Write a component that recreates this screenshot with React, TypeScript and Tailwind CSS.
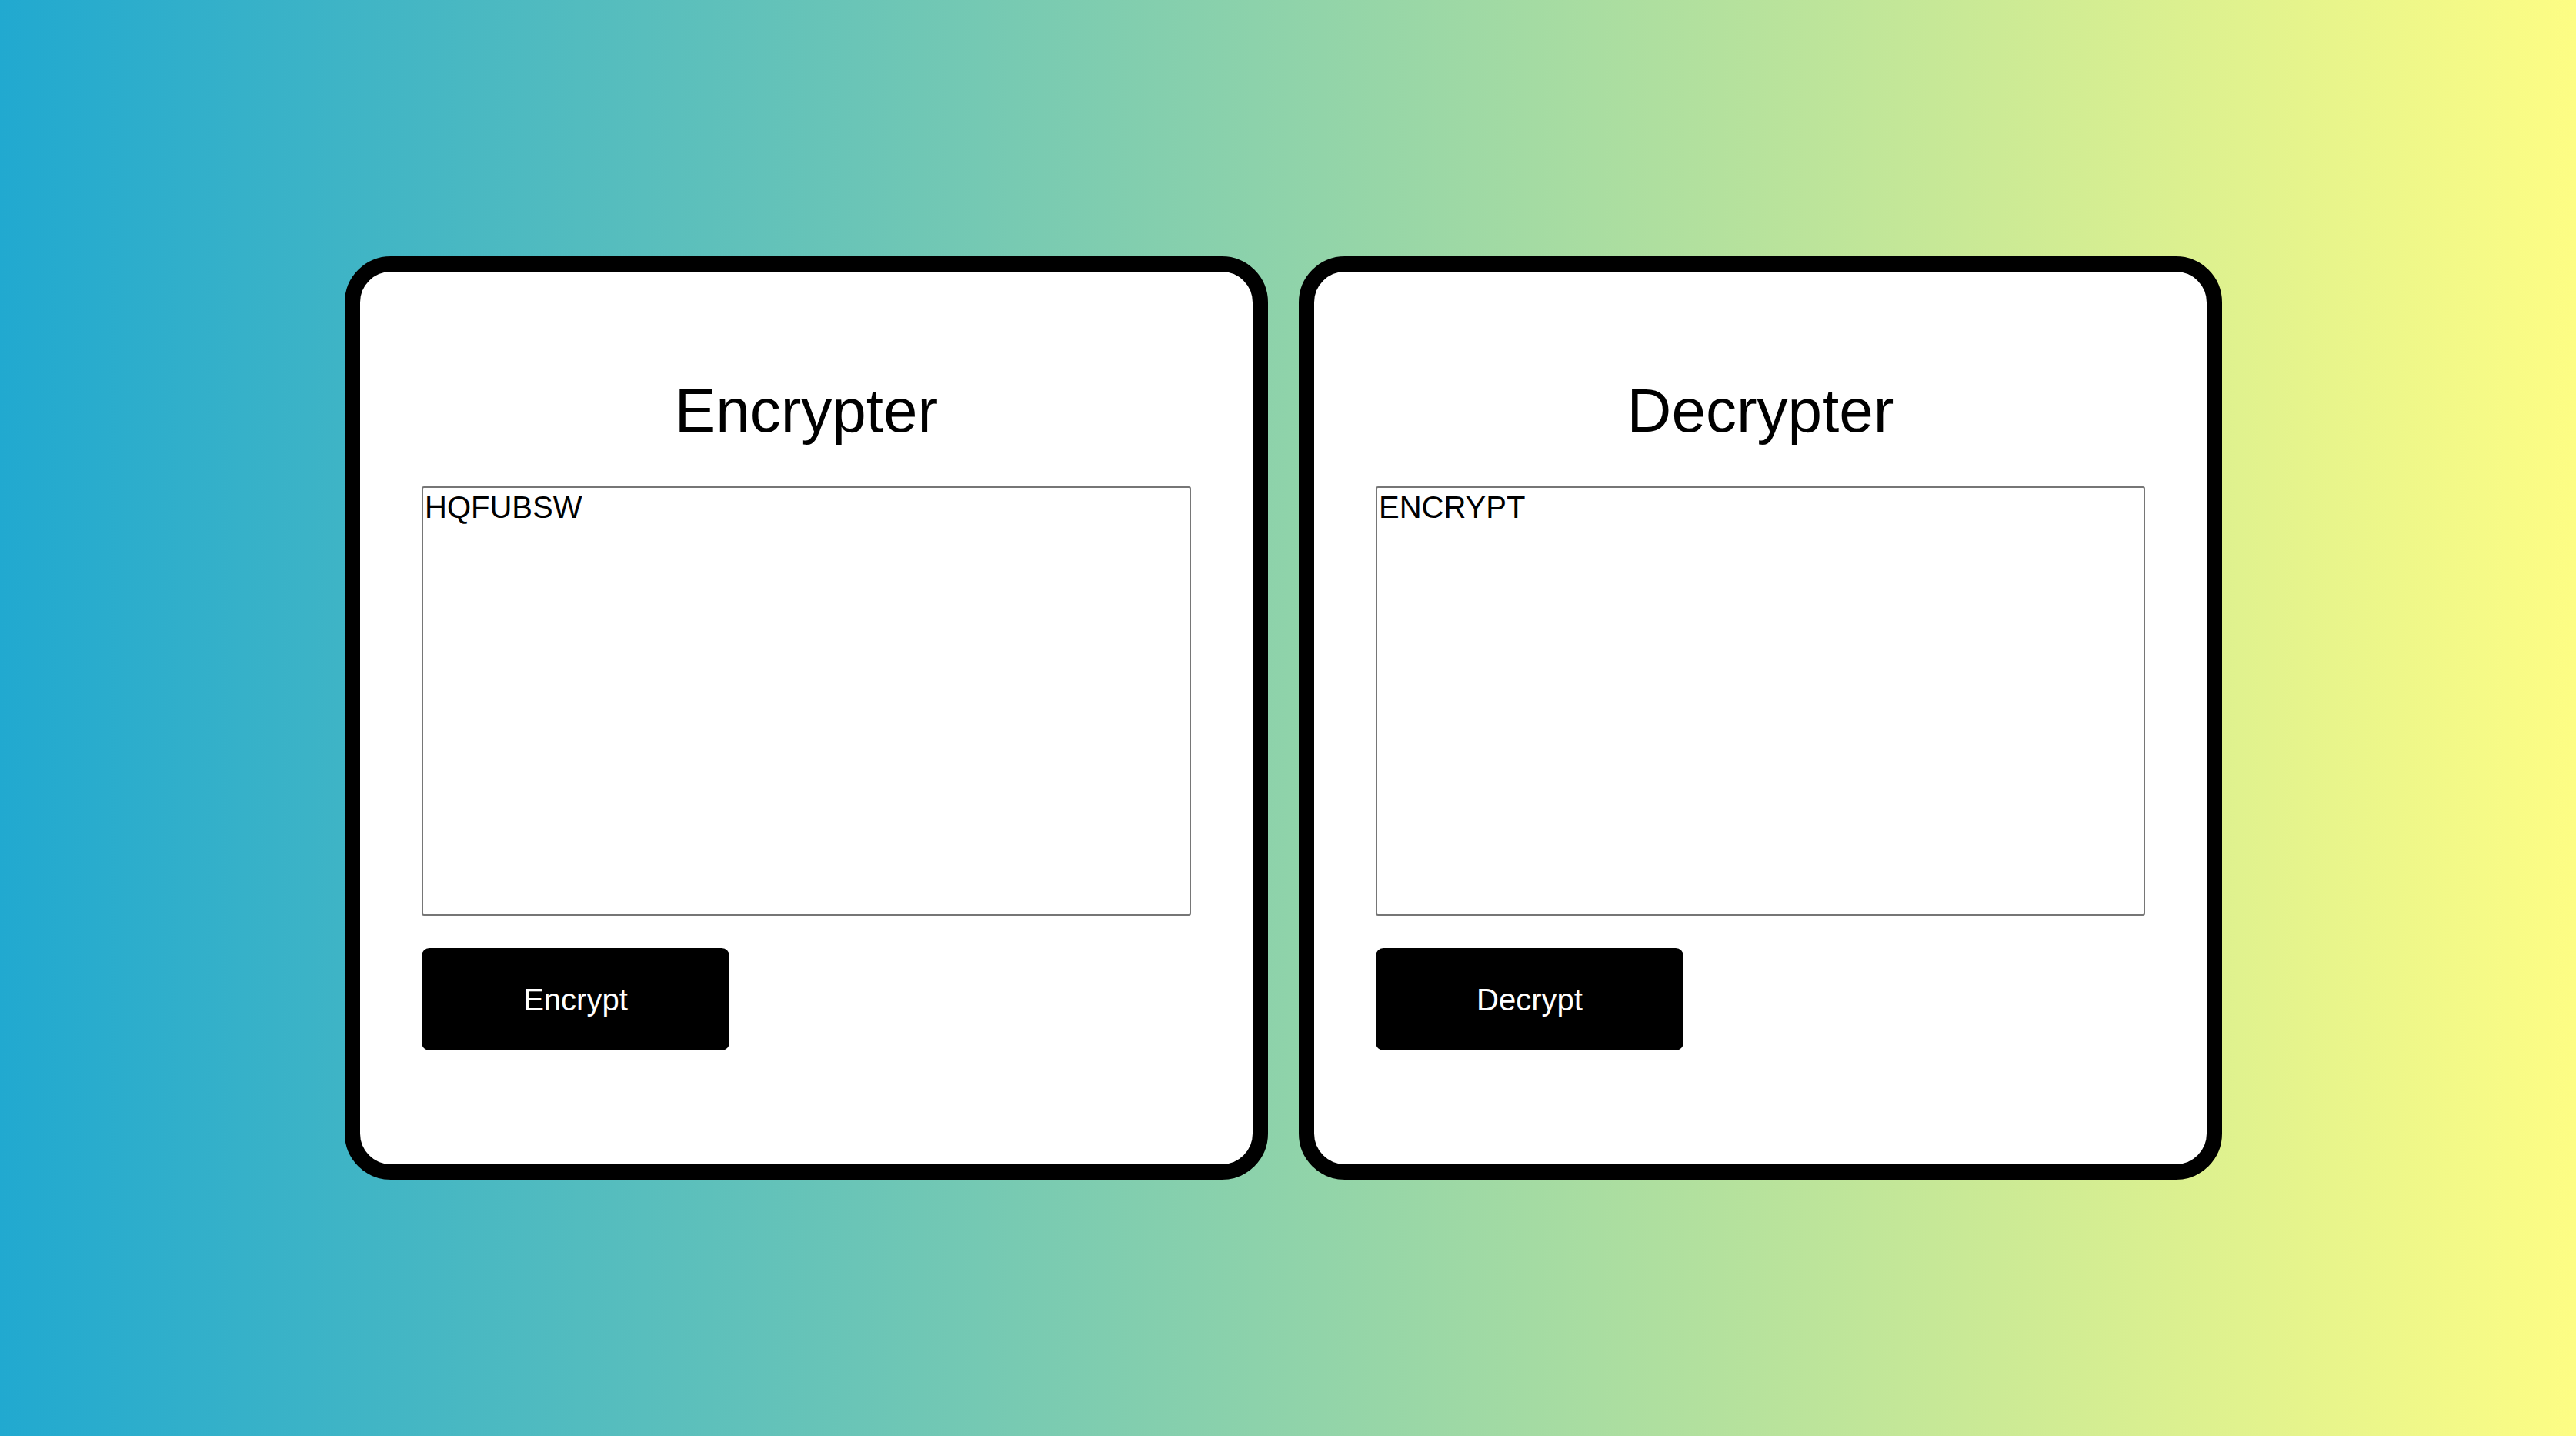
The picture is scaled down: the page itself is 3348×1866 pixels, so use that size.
import { useState } from "react";

function Panel({ title, action, initial }: { title: string; action: string; initial: string }) {
   const [text, setText] = useState(initial);
   return (
      <div className="w-[1200px] h-[1200px] bg-white border-[20px] border-black rounded-[60px] px-[80px] pt-[82px]">
         <h1 className="text-[80px] text-center text-black my-[54px] leading-[89px]">{title}</h1>
         <textarea
            value={text}
            onChange={(e) => setText(e.target.value)}
            className="block w-[1000px] h-[558px] border-2 border-[#767676] rounded-[3px] p-[2px] text-[40px] leading-[46px] text-black resize-none outline-none"
         />
         <button className="mt-[42px] w-[400px] h-[133px] bg-black text-white text-[40px] rounded-[10px]">{action}</button>
      </div>
   );
}

export default function App() {
   return (
      <main className="w-full h-[1866px] flex items-center justify-center gap-10 pr-[12px] bg-linear-to-r/srgb from-[#21a9d0] to-[#fdfd84] font-['Liberation_Sans',Arial,sans-serif]">
         <Panel title="Encrypter" action="Encrypt" initial="HQFUBSW" />
         <Panel title="Decrypter" action="Decrypt" initial="ENCRYPT" />
      </main>
   );
}
